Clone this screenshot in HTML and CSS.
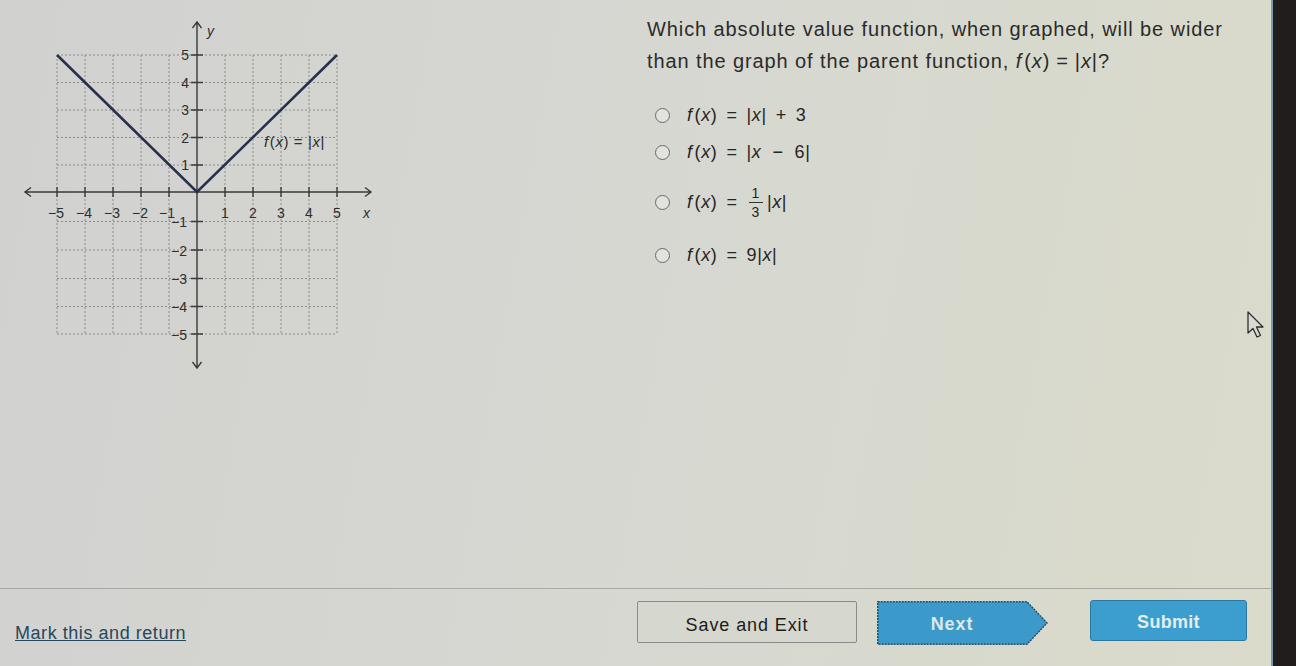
FILE: index.html
```html
<!DOCTYPE html>
<html lang="en">
<head>
<meta charset="utf-8">
<title>Absolute value question</title>
<link rel="stylesheet" href="styles.css">
</head>
<body>
<div class="screen">
  <div class="main">
    <div class="graph-pane">
      <svg class="graph" width="370" height="370" viewBox="15 10 370 370">
        <path class="grid" d="M57 55V334 M85 55V334 M113 55V334 M141 55V334 M169 55V334 M225 55V334 M253 55V334 M281 55V334 M309 55V334 M337 55V334 M57 55H337 M57 82.5H337 M57 110H337 M57 137.5H337 M57 165H337 M57 221.5H337 M57 250H337 M57 278.5H337 M57 306.5H337 M57 334H337"/>
        <path class="axis" d="M25 192H371 M31 187.5L25 192L31 196.5 M365 187.5L371 192L365 196.5 M197 22V368 M192.5 28L197 22L201.5 28 M192.5 362L197 368L201.5 362"/>
        <path class="axis" d="M57 187V197 M85 187V197 M113 187V197 M141 187V197 M169 187V197 M225 187V197 M253 187V197 M281 187V197 M309 187V197 M337 187V197 M191 55H203 M191 82.5H203 M191 110H203 M191 137.5H203 M191 165H203 M191 221.5H203 M191 250H203 M191 278.5H203 M191 306.5H203 M191 334H203"/>
        <polyline class="curve" points="57,55 197,192 337,55"/>
        <g class="lbl">
          <text x="56" y="218" text-anchor="middle">−5</text>
          <text x="84" y="218" text-anchor="middle">−4</text>
          <text x="112" y="218" text-anchor="middle">−3</text>
          <text x="140" y="218" text-anchor="middle">−2</text>
          <text x="167" y="218" text-anchor="middle">−1</text>
          <text x="225" y="218" text-anchor="middle">1</text>
          <text x="253" y="218" text-anchor="middle">2</text>
          <text x="281" y="218" text-anchor="middle">3</text>
          <text x="309" y="218" text-anchor="middle">4</text>
          <text x="337" y="218" text-anchor="middle">5</text>
          <text x="189" y="60" text-anchor="end">5</text>
          <text x="189" y="87.5" text-anchor="end">4</text>
          <text x="189" y="115" text-anchor="end">3</text>
          <text x="189" y="142.5" text-anchor="end">2</text>
          <text x="189" y="170" text-anchor="end">1</text>
          <text x="187" y="227" text-anchor="end">−1</text>
          <text x="187" y="255.5" text-anchor="end">−2</text>
          <text x="187" y="284" text-anchor="end">−3</text>
          <text x="187" y="312" text-anchor="end">−4</text>
          <text x="187" y="339.5" text-anchor="end">−5</text>
          <text class="var" x="207" y="36">y</text>
          <text class="var" x="363" y="218">x</text>
          <text class="fl" x="264" y="146.5"><tspan class="it">f</tspan><tspan dx="1">(</tspan><tspan class="it">x</tspan>) = |<tspan class="it">x</tspan>|</text>
        </g>
      </svg>
    </div>
    <div class="question-pane">
      <p class="prompt">Which absolute value function, when graphed, will be wider than the graph of the parent function, <span class="m"><i class="fn">f</i><span>(</span><i>x</i><span>)</span><span class="eq">=</span><span>|</span><i>x</i><span>|</span></span>?</p>
      <ul class="options">
        <li class="option"><span class="radio"></span><span class="math"><i class="fn">f</i>(<i>x</i>)<span class="op">=</span>|<i>x</i>|<span class="op">+</span>3</span></li>
        <li class="option"><span class="radio"></span><span class="math"><i class="fn">f</i>(<i>x</i>)<span class="op">=</span>|<i>x</i><span class="op wide">−</span>6|</span></li>
        <li class="option frac-row"><span class="radio"></span><span class="math"><i class="fn">f</i>(<i>x</i>)<span class="op">=</span><span class="frac"><span class="num">1</span><span class="den">3</span></span>|<i>x</i>|</span></li>
        <li class="option"><span class="radio"></span><span class="math"><i class="fn">f</i>(<i>x</i>)<span class="op">=</span>9|<i>x</i>|</span></li>
      </ul>
    </div>
  </div>
  <div class="footer">
    <a class="mark" href="#">Mark this and return</a>
    <button class="btn save" type="button">Save and Exit</button>
    <button class="btn next" type="button">
      <svg class="next-shape" width="171" height="44" viewBox="0 0 171 44"><polygon points="0.75,0.75 150,0.75 170,22 150,43.25 0.75,43.25"/></svg>
      <span class="next-label">Next</span>
    </button>
    <button class="btn submit" type="button">Submit</button>
  </div>
  <svg class="cursor" width="18" height="28" viewBox="0 0 18 28"><path d="M1 1 L1 22 L6 17.5 L10 26 L13.5 24.5 L9.5 16 L16 16 Z"/></svg>
</div>
<div class="bezel"></div>
</body>
</html>
```

FILE: styles.css
```css
* { box-sizing: border-box; }

html, body {
  margin: 0;
  height: 666px;
  overflow: hidden;
}

body {
  display: flex;
  font-family: "Liberation Sans", Arial, sans-serif;
  color: #2a2a2a;
  background: #1f1b1b;
}

.screen {
  position: relative;
  width: 1271px;
  display: flex;
  flex-direction: column;
  background: linear-gradient(100deg, #d1d2d0 0%, #d6d7d1 45%, #dadbcb 100%);
}

.bezel {
  flex: 1;
  background: #211d1d;
  border-left: 2px solid #7d98ad;
}

.main {
  flex: 1;
  display: flex;
}

.graph-pane {
  padding: 10px 0 0 15px;
}

.graph { display: block; }

.grid {
  fill: none;
  stroke: #8c8c8a;
  stroke-width: 1;
  stroke-dasharray: 2 2;
}

.axis {
  fill: none;
  stroke: #3a3a3a;
  stroke-width: 1.4;
}

.curve {
  fill: none;
  stroke: #27304c;
  stroke-width: 2.6;
}

.lbl text {
  font-family: "Liberation Sans", Arial, sans-serif;
  font-size: 14px;
  fill: #2e2e2e;
}

.lbl .var { font-style: italic; font-size: 14px; }
.lbl .it { font-style: italic; }
.lbl .fl { font-size: 15px; letter-spacing: 0.6px; }

.question-pane {
  margin-left: 262px;
  padding-top: 13px;
}

.prompt {
  margin: 0;
  width: 600px;
  font-size: 20px;
  line-height: 32px;
  letter-spacing: 0.9px;
  color: #2b2b2b;
}

.m {
  display: inline-flex;
  white-space: nowrap;
}

.m .eq { margin: 0 6px; }
.m i, .math i { font-style: italic; }
.fn { padding-right: 2px; }

.options {
  list-style: none;
  margin: 20px 0 0;
  padding: 0;
}

.option {
  height: 37px;
  display: flex;
  align-items: center;
  padding-left: 8px;
}

.option.frac-row {
  margin: 13px 0 16px;
}

.radio {
  width: 15px;
  height: 15px;
  border: 1.5px solid #6a6a68;
  border-radius: 50%;
  background: #e2e3de;
  margin-right: 17px;
}

.math {
  font-size: 18px;
  letter-spacing: 0.6px;
  color: #252525;
  display: flex;
  align-items: center;
}

.op {
  margin: 0 9px;
}

.op.wide { margin: 0 11px; }

.frac {
  display: inline-flex;
  flex-direction: column;
  align-items: center;
  font-size: 14px;
  line-height: 15px;
  margin: 0 2px 0 0;
  padding: 0 2px;
}

.frac .num {
  border-bottom: 1px solid #333;
  padding: 0 3px 1px;
}

.frac .den { padding-top: 2px; }

.footer {
  height: 78px;
  border-top: 1px solid #a9aaa4;
  display: flex;
  align-items: flex-start;
  padding: 12px 0 0 15px;
}

.mark {
  margin-top: 21px;
  width: 173px;
  font-size: 18px;
  line-height: 22px;
  letter-spacing: 0.55px;
  color: #27475a;
  text-decoration: underline;
}

.btn {
  font-family: "Liberation Sans", Arial, sans-serif;
  font-size: 18px;
  letter-spacing: 0.9px;
  padding: 0;
  cursor: default;
}

.save {
  margin-left: 449px;
  width: 220px;
  height: 42px;
  border: 1px solid #8a8b86;
  border-radius: 2px;
  background: #d6d7cf;
  color: #1c1c1c;
  padding-top: 6px;
}

.next {
  position: relative;
  margin-left: 20px;
  width: 171px;
  height: 44px;
  border: 0;
  background: transparent;
  text-align: left;
}

.next-shape {
  position: absolute;
  left: 0;
  top: 0;
}

.next-shape polygon {
  fill: #3b9aca;
  stroke: #244f68;
  stroke-width: 1.5;
  stroke-dasharray: 2 1;
}

.next-label {
  position: relative;
  display: block;
  width: 150px;
  text-align: center;
  font-weight: bold;
  color: #dde8ee;
  top: 1px;
}

.submit {
  margin-left: 42px;
  margin-top: -1px;
  width: 157px;
  height: 41px;
  border: 1px solid #2b77a0;
  border-radius: 3px;
  background: #3c9ecf;
  color: #e3edf2;
  font-weight: bold;
  letter-spacing: 0.3px;
  padding-top: 4px;
}

.cursor {
  position: absolute;
  left: 1247px;
  top: 311px;
}

.cursor path {
  fill: #dadad4;
  stroke: #2e2e2e;
  stroke-width: 1.3;
  stroke-linejoin: round;
}
```
